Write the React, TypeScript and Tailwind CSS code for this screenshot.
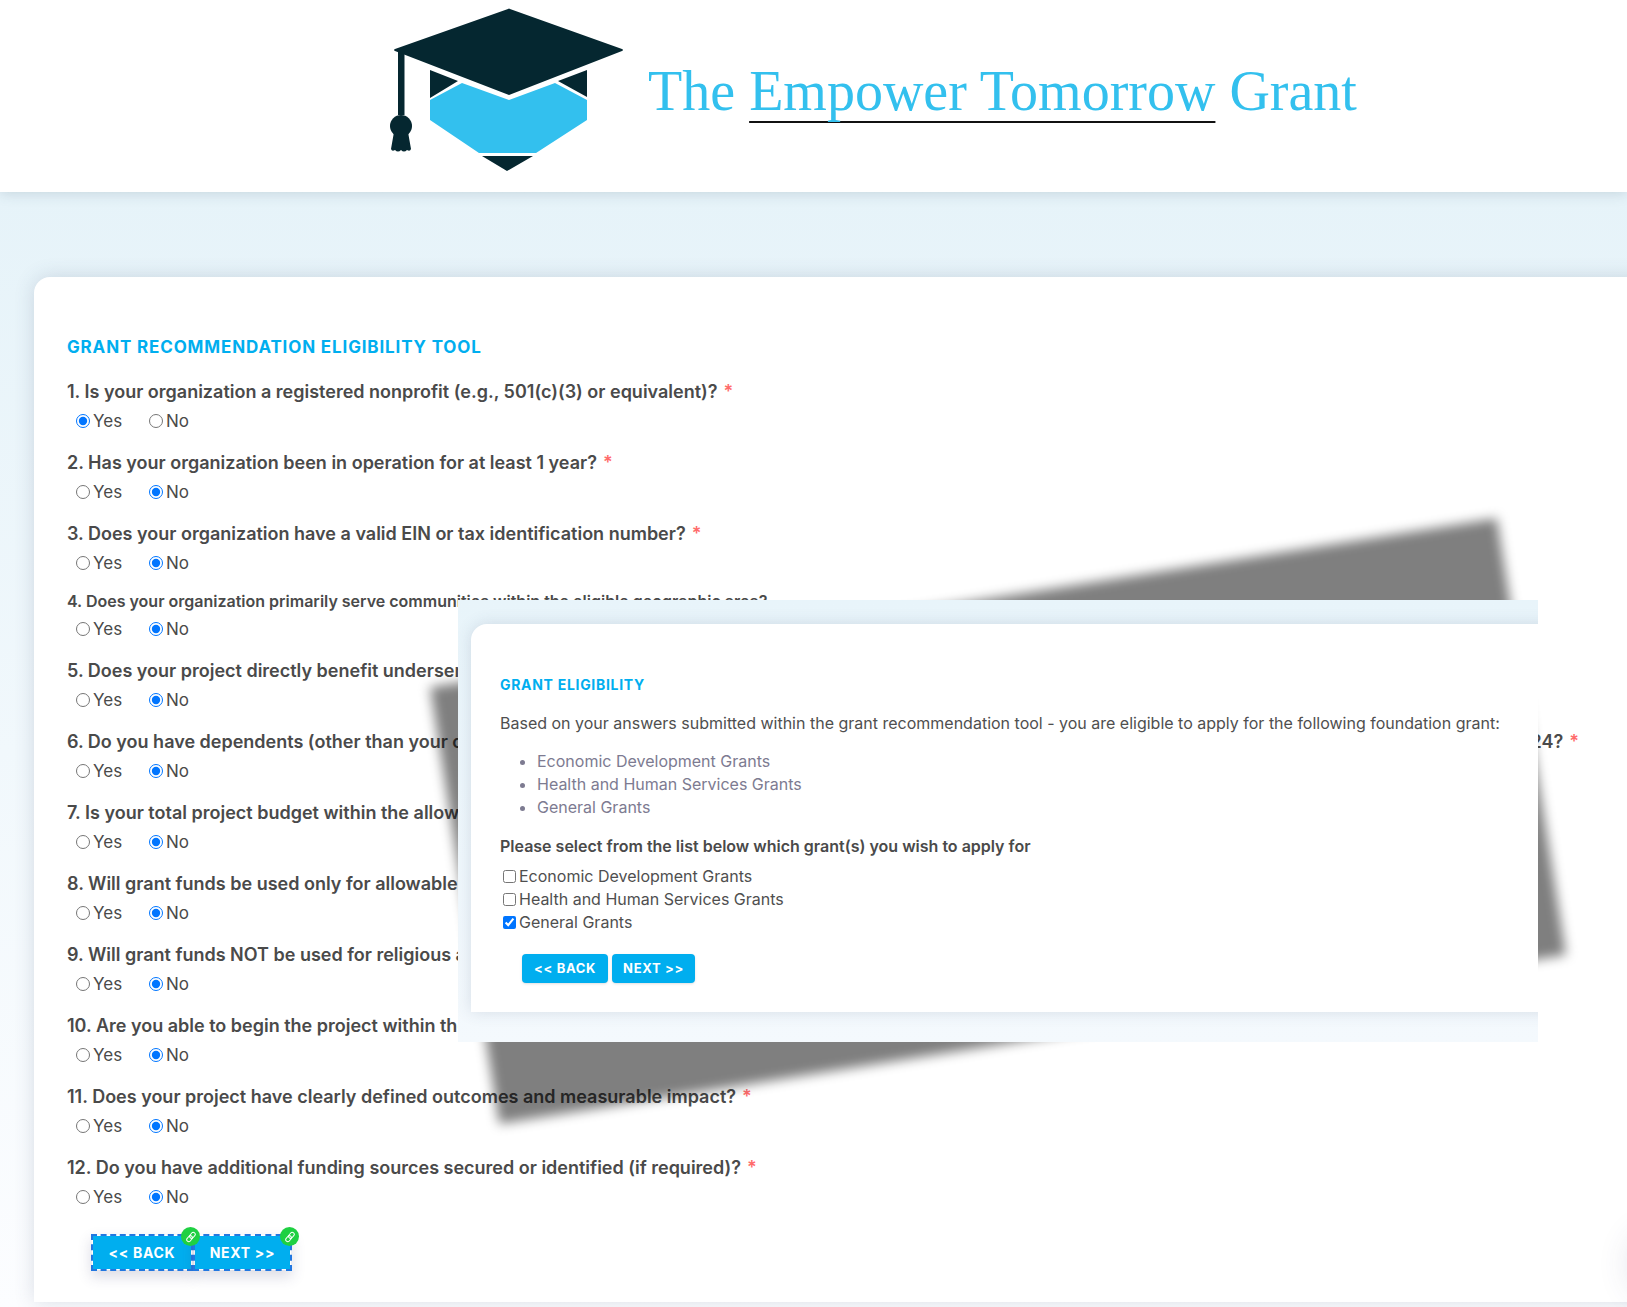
import React from 'react';

interface Question {
  text: string;
  answer: 'yes' | 'no';
  required?: boolean;
  small?: boolean;
  tail?: string;
}

const questions: Question[] = [
  { text: '1. Is your organization a registered nonprofit (e.g., 501(c)(3) or equivalent)?', answer: 'yes', required: true },
  { text: '2. Has your organization been in operation for at least 1 year?', answer: 'no', required: true },
  { text: '3. Does your organization have a valid EIN or tax identification number?', answer: 'no', required: true },
  { text: '4. Does your organization primarily serve communities within the eligible geographic area?', answer: 'no', small: true },
  { text: '5. Does your project directly benefit underser', answer: 'no' },
  { text: '6. Do you have dependents (other than your c', answer: 'no', required: true, tail: '24?' },
  { text: '7. Is your total project budget within the allow', answer: 'no' },
  { text: '8. Will grant funds be used only for allowable', answer: 'no' },
  { text: '9. Will grant funds NOT be used for religious a', answer: 'no' },
  { text: '10. Are you able to begin the project within the', answer: 'no' },
  { text: '11. Does your project have clearly defined outcomes and measurable impact?', answer: 'no', required: true },
  { text: '12. Do you have additional funding sources secured or identified (if required)?', answer: 'no', required: true },
];

const grants = ['Economic Development Grants', 'Health and Human Services Grants', 'General Grants'];

const Logo: React.FC = () => (
  <svg viewBox="0 0 234 166" className="w-[234px] h-[166px] shrink-0" aria-hidden="true">
    <path d="M118 1 Q119 0 120 1 L232 41 Q234 42 232 43 L119 87 L5 43 Q3 42 5 41 Z" fill="#052730" />
    <path d="M8 42 H14.500 V107 H8 Z" fill="#052730" />
    <circle cx="11" cy="118" r="11" fill="#052730" />
    <path d="M4 124 H18 L21 141 Q20 144 17 142 Q14 145 11 142 Q8 145 5 142 Q2 144 1 141 Z" fill="#052730" />
    <path d="M40 62 L68 73 L40 90 Z M197 62 V89 L168 73 Z M92 148 H143 L117 163 Z" fill="#052730" />
    <path d="M72 75 L119 92 L165 75 L197 92 V112 L146 145 H89 L40 112 V92 Z" fill="#33c0ee" />
  </svg>
);

const LinkBadge: React.FC = () => (
  <span className="absolute -top-[9px] -right-[9px] z-10 flex items-center justify-center w-[19px] h-[19px] rounded-full bg-[#1fd042]">
    <svg viewBox="0 0 24 24" className="w-3 h-3" fill="none" stroke="#fff" strokeWidth="2" strokeLinecap="round" strokeLinejoin="round">
      <g transform="rotate(-50 12 12)">
        <rect x="1" y="8" width="13" height="8" rx="4" />
        <rect x="10" y="8" width="13" height="8" rx="4" />
      </g>
    </svg>
  </span>
);

const Required: React.FC = () => <span className="ml-1.5 text-[#ff6b6b]">*</span>;

const QuestionRow: React.FC<{ question: Question; index: number }> = ({ question, index }) => (
  <fieldset className={index === 2 ? 'mb-3.5' : 'mb-[18px]'}>
    <legend
      className={`w-full flex justify-between leading-6 font-semibold text-[#4a4a4a] whitespace-nowrap ${question.small ? 'text-base' : 'text-lg leading-6'}`}
    >
      <span>
        {question.text}
        {question.required && !question.tail && <Required />}
      </span>
      {question.tail && (
        <span className="mr-[68px]">
          {question.tail}
          <Required />
        </span>
      )}
    </legend>
    <div className={`flex pl-[9px] text-[17px] leading-6 text-[#4a4a4a] ${question.small ? 'pt-1' : 'pt-[5px]'}`}>
      {(['yes', 'no'] as const).map((value) => (
        <label key={value} className="flex items-center w-[73px]">
          <input
            type="radio"
            name={`question-${index}`}
            defaultChecked={question.answer === value}
            className="w-3.5 h-3.5 mr-[3px] accent-[#0075ff]"
          />
          {value === 'yes' ? 'Yes' : 'No'}
        </label>
      ))}
    </div>
  </fieldset>
);

const EligibilityPopup: React.FC = () => (
  <div className="absolute left-[458px] right-[89px] top-[408px]">
    <div className="absolute inset-0 bg-black/50 -rotate-9 blur-[6px]" />
    <div className="relative overflow-hidden bg-gradient-to-b from-[#e8f4fa] to-[#f4f9fd] pt-6 pl-[13px] pb-[30px]">
      <section className="bg-white rounded-tl-2xl shadow-[0_0_16px_rgba(60,80,110,0.16)] pl-[29px] pt-[49px] pb-[29px] -mr-5 text-base text-[#4f4f4f]">
        <h2 className="text-sm leading-6 font-bold tracking-wider text-[#00aeef]">GRANT ELIGIBILITY</h2>
        <p className="mt-3.5 leading-6 whitespace-nowrap">
          Based on your answers submitted within the grant recommendation tool - you are eligible to apply for the
          following foundation grant:
        </p>
        <ul className="mt-[15px] pl-[37px] list-disc leading-[23px] text-[#7d7b91]">
          {grants.map((grant) => (
            <li key={grant}>{grant}</li>
          ))}
        </ul>
        <p className="mt-[15px] leading-6 font-semibold text-[#4a4a4a]">
          Please select from the list below which grant(s) you wish to apply for
        </p>
        <div className="mt-[7px] pl-[3px] leading-[23px]">
          {grants.map((grant) => (
            <label key={grant} className="flex items-center">
              <input
                type="checkbox"
                defaultChecked={grant === 'General Grants'}
                className="w-[13px] h-[13px] mr-[3px] accent-[#0075ff]"
              />
              {grant}
            </label>
          ))}
        </div>
        <div className="flex gap-1 mt-5 ml-[22px] text-[13px] font-bold tracking-wider text-white">
          <button type="button" className="w-[86px] h-[29px] rounded-sm bg-[#00aeef] shadow-sm">&lt;&lt; BACK</button>
          <button type="button" className="w-[83px] h-[29px] rounded-sm bg-[#00aeef] shadow-sm">NEXT &gt;&gt;</button>
        </div>
      </section>
    </div>
  </div>
);

const App: React.FC = () => {
  return (
    <div className="min-h-screen overflow-hidden bg-white font-['Inter','Liberation_Sans',sans-serif]">
      <header className="relative z-10 flex items-center justify-center h-48 pb-2.5 pl-[120px] bg-white shadow-[0_2px_12px_rgba(60,90,110,0.18)]">
        <Logo />
        <h1 className="ml-6 text-[56px] leading-none text-[#33c0ee] whitespace-nowrap font-['Liberation_Serif',serif]">
          The{' '}
          <span className="underline decoration-[#111] decoration-2 underline-offset-[11px] [text-decoration-skip-ink:none]">
            Empower Tomorrow
          </span>{' '}
          Grant
        </h1>
      </header>

      <main className="relative overflow-hidden bg-gradient-to-b from-[#e6f3f9] to-[#fcfdff] pt-[85px] pb-1.5 pl-[34px]">
        <form className="bg-white rounded-tl-2xl shadow-[0_0_20px_rgba(60,80,110,0.18)] pl-[33px] pt-[58px] pb-[31px] -mr-5">
          <h2 className="mb-[21px] text-[17px] leading-6 font-bold tracking-wider text-[#00aeef]">
            GRANT RECOMMENDATION ELIGIBILITY TOOL
          </h2>
          {questions.map((question, index) => (
            <QuestionRow key={index} question={question} index={index} />
          ))}
          <div className="flex mt-[25px] ml-6 text-sm font-bold tracking-wider text-white">
            <button type="button" className="relative w-[102px] h-[37px] bg-[#00aeef] bg-clip-padding border-2 border-dashed border-[#2277e0] shadow-[0_6px_14px_rgba(60,60,110,0.18)]">
              &lt;&lt; BACK
              <LinkBadge />
            </button>
            <button type="button" className="relative w-[99px] h-[37px] bg-[#00aeef] bg-clip-padding border-2 border-dashed border-[#2277e0] shadow-[0_6px_14px_rgba(60,60,110,0.18)]">
              NEXT &gt;&gt;
              <LinkBadge />
            </button>
          </div>
        </form>
        <EligibilityPopup />
        {/* floating round widget parked past the right edge, only its glow shows */}
        <div className="absolute -right-[66px] bottom-3.5 w-[60px] h-[60px] rounded-full shadow-[0_0_36px_rgba(60,60,110,0.2)]" />
      </main>
    </div>
  );
};

export default App;
